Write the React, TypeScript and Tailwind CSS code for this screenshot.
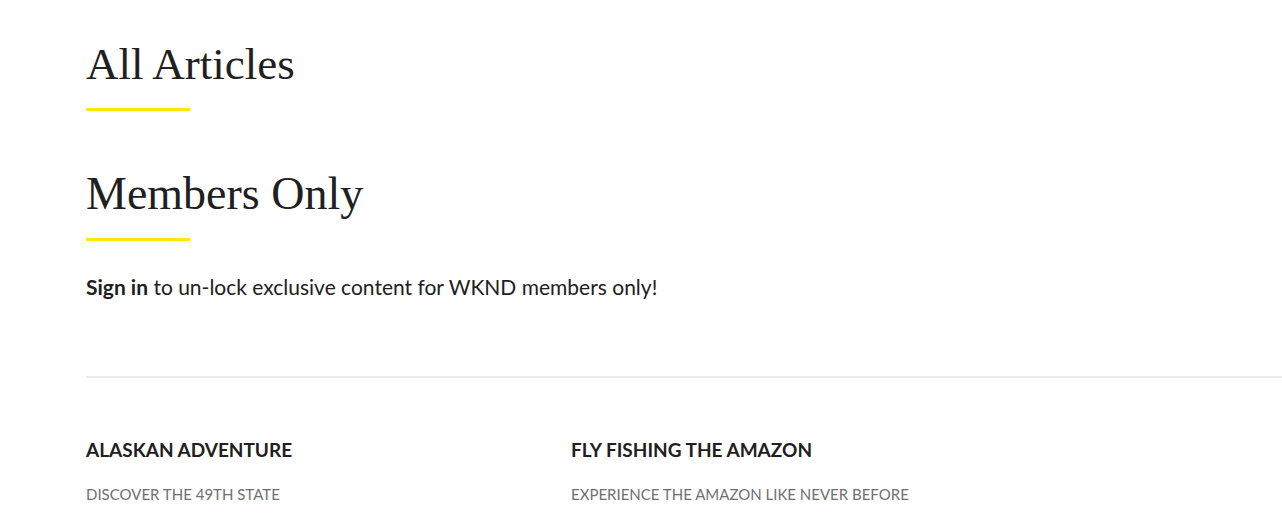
export default function App() {
  const articles = [
    { title: "Alaskan Adventure", sub: "Discover the 49th State" },
    { title: "Fly Fishing the Amazon", sub: "Experience the Amazon like never before" },
  ];

  return (
    <div className="min-h-[525px] bg-white pl-[86px] text-[#202020]" style={{ fontFamily: "Lato, 'Liberation Sans', sans-serif" }}>
      <section className="pt-[38px]">
        <h2 className="text-[45px] leading-[52px] font-normal" style={{ fontFamily: "'Liberation Serif', serif" }}>All Articles</h2>
        <div className="mt-[18px] h-[3px] w-[104px] bg-[#fee805]" />
      </section>

      <section className="pt-[57px]">
        <h2 className="text-[46px] leading-[52px] font-normal" style={{ fontFamily: "'Liberation Serif', serif" }}>Members Only</h2>
        <div className="mt-[18px] h-[3px] w-[104px] bg-[#fee805]" />
        <p className="mt-[32px] text-[21px] leading-[28px]">
          <span className="font-bold">Sign in</span> to un-lock exclusive content for WKND members only!
        </p>
      </section>

      <hr className="mt-[75px] border-0 h-[2px] bg-[#ebebeb]" />

      <div className="mt-[58px] grid grid-cols-[485px_485px]">
        {articles.map((a) => (
          <div key={a.title}>
            <h3 className="text-[19px] leading-[28px] font-bold uppercase">{a.title}</h3>
            <p className="mt-[20px] text-[15px] leading-[20px] uppercase text-[#707070]">{a.sub}</p>
          </div>
        ))}
      </div>
    </div>
  );
}
